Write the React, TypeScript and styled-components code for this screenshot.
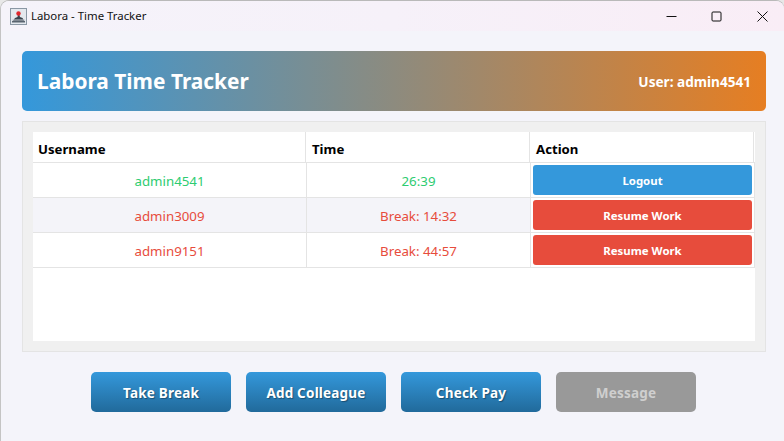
import React from 'react'
import styled, { createGlobalStyle } from 'styled-components';

const GlobalStyle = createGlobalStyle`
	html, body {
		margin: 0;
		padding: 0;
		width: 784px;
		height: 441px;
		overflow: hidden;
		background: #e8e8e8;
		font-family: "Noto Sans", "Open Sans", sans-serif;
	}
`;

const WindowFrame = styled.div`
	width: 783px;
	height: 440px;
	margin: 1px 0 0 1px;
	border-radius: 8px 8px 0 0;
	background: #f4f4fa;
	box-shadow: 0 -1px 0 #b9b9b9, -1px 0 0 #c4c4c4;
	display: flex;
	flex-direction: column;
	overflow: hidden;
`;
const TitleBar = styled.div`
	height: 30px;
	flex: none;
	display: flex;
	align-items: center;
	background: linear-gradient(90deg, #f5f3fa 0%, #f6f1f9 50%, #f9edf6 100%);
	padding: 0 2px 0 9px;
`;
const TitleIcon = styled.svg`
	width: 17px;
	height: 17px;
	flex: none;
`;
const TitleText = styled.span`
	margin-left: 4px;
	padding-bottom: 1px;
	font-size: 11.4px;
	color: #111;
	flex: 1;
`;
const WindowButton = styled.div`
	width: 40px;
	height: 30px;
	margin-left: 5.5px;
	display: flex;
	align-items: center;
	justify-content: center;
`;
const Content = styled.div`
	flex: 1;
	padding: 20px 18px 0 21px;
	display: flex;
	flex-direction: column;
`;
const Header = styled.div`
	height: 60px;
	flex: none;
	border-radius: 5px;
	background: linear-gradient(90deg, #3498db, #e67e22);
	display: flex;
	align-items: center;
	justify-content: space-between;
	padding: 0 15px;
	color: #fff;
`;
const AppTitle = styled.div`
	font-size: 20.9px;
	font-weight: 700;
`;
const UserLabel = styled.div`
	font-size: 13.6px;
	font-weight: 700;
`;
const TablePanel = styled.div`
	margin-top: 10px;
	height: 231px;
	box-sizing: border-box;
	flex: none;
	background: #f0f0f0;
	border: 1px solid #e4e4e4;
	padding: 10px;
`;
const TableArea = styled.div`
	height: 209px;
	background: #fff;
`;
const Row = styled.div<{ $alt?: boolean }>`
	display: grid;
	grid-template-columns: 274px 224px 224px;
	height: 35px;
	box-sizing: border-box;
	border-bottom: 1px solid #e4e4e4;
	background: ${p => (p.$alt ? '#f4f4f9' : '#fff')};
`;
const HeaderRow = styled(Row)`
	height: 31px;
	background: #fff;
`;
const HeadCell = styled.div`
	display: flex;
	align-items: center;
	margin-right: 1px;
	padding: 4px 0 0 5px;
	font-size: 13.2px;
	font-weight: 700;
	color: #000;
	border-right: 1px solid #e4e4e4;
`;
const Cell = styled.div<{ $color: string }>`
	display: flex;
	align-items: center;
	justify-content: center;
	padding-top: 1px;
	font-size: 13.3px;
	color: ${p => p.$color};
	border-right: 1px solid #e4e4e4;
`;
const ActionCell = styled.div`
	display: flex;
	align-items: center;
	padding-left: 2px;
	background: #fff;
	border-right: 1px solid #e4e4e4;
`;
const RowButton = styled.button<{ $color: string }>`
	width: 219px;
	height: 30px;
	border: 1px solid ${p => p.$color}dd;
	border-radius: 3px;
	background: ${p => p.$color};
	color: #fff;
	font-family: inherit;
	font-size: 11.4px;
	font-weight: 700;
	padding: 0;
`;
const ButtonBar = styled.div`
	margin-top: 20px;
	padding-right: 1px;
	display: flex;
	justify-content: center;
	gap: 15px;
`;
const ActionButton = styled.button<{ $disabled?: boolean }>`
	width: 140px;
	height: 40px;
	border: none;
	border-radius: 5px;
	background: ${p => (p.$disabled ? '#999999' : 'linear-gradient(180deg, #3498db, #216a9b)')};
	color: ${p => (p.$disabled ? '#cfcfcf' : '#fff')};
	font-family: inherit;
	font-size: 13.5px;
	font-weight: 700;
	letter-spacing: 0.2px;
	text-shadow: ${p => (p.$disabled ? 'none' : '1px 1px 1px rgba(0, 0, 0, 0.35)')};
	padding: 1px 0 0;
`;

const RED = '#e74c3c';
const GREEN = '#2ecc71';

const rows = [
	{ name: 'admin4541', time: '26:39', color: GREEN, action: 'Logout', actionColor: '#3498db' },
	{ name: 'admin3009', time: 'Break: 14:32', color: RED, action: 'Resume Work', actionColor: RED },
	{ name: 'admin9151', time: 'Break: 44:57', color: RED, action: 'Resume Work', actionColor: RED },
];

export default function App() {
	return (
		<>
			<GlobalStyle />
			<WindowFrame>
				<TitleBar>
					<TitleIcon viewBox="0 0 17 17">
						<rect x="0.5" y="0.5" width="16" height="16" fill="#e4e8ee" stroke="#8a97a4" />
						<path d="M2 14 L5 10 L7.5 9 L8.5 4 L10 9 L12.5 10 L15 14 Z" fill="#39424c" />
						<rect x="2" y="11.5" width="13" height="1" fill="#c9d0d8" />
						<rect x="2" y="13" width="13" height="1.5" fill="#59646f" />
						<circle cx="8.5" cy="5.5" r="2.2" fill="#e0262c" />
					</TitleIcon>
					<TitleText>Labora - Time Tracker</TitleText>
					<WindowButton>
						<svg width="11" height="11" viewBox="0 0 11 11"><path d="M0.5 5.5 H10.5" stroke="#111" strokeWidth="1" /></svg>
					</WindowButton>
					<WindowButton>
						<svg width="11" height="11" viewBox="0 0 11 11"><rect x="1" y="1" width="9" height="9" rx="1" fill="none" stroke="#111" strokeWidth="1" /></svg>
					</WindowButton>
					<WindowButton>
						<svg width="11" height="11" viewBox="0 0 11 11"><path d="M0.5 0.5 L10.5 10.5 M10.5 0.5 L0.5 10.5" stroke="#111" strokeWidth="1" /></svg>
					</WindowButton>
				</TitleBar>
				<Content>
					<Header>
						<AppTitle>Labora Time Tracker</AppTitle>
						<UserLabel>User: admin4541</UserLabel>
					</Header>
					<TablePanel>
						<TableArea>
							<HeaderRow>
								<HeadCell>Username</HeadCell>
								<HeadCell>Time</HeadCell>
								<HeadCell>Action</HeadCell>
							</HeaderRow>
							{rows.map((r, i) => (
								<Row key={r.name} $alt={i === 1}>
									<Cell $color={r.color}>{r.name}</Cell>
									<Cell $color={r.color}>{r.time}</Cell>
									<ActionCell>
										<RowButton $color={r.actionColor}>{r.action}</RowButton>
									</ActionCell>
								</Row>
							))}
						</TableArea>
					</TablePanel>
					<ButtonBar>
						<ActionButton>Take Break</ActionButton>
						<ActionButton>Add Colleague</ActionButton>
						<ActionButton>Check Pay</ActionButton>
						<ActionButton $disabled>Message</ActionButton>
					</ButtonBar>
				</Content>
			</WindowFrame>
		</>
	)
}
